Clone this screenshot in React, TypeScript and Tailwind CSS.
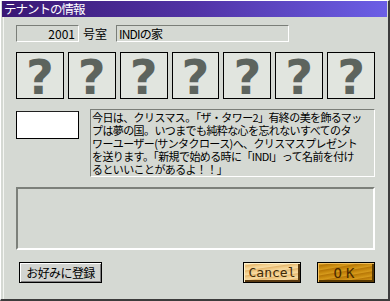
import React from "react";

const jp = { fontFamily: '"Noto Sans CJK JP", "Noto Sans", sans-serif' };

function QBox() {
  return (
    <div className="w-[48px] h-[47px] border border-black bg-[#e1e5df] flex items-center justify-center">
      <span
        className="text-[48px] font-bold leading-none text-[#5d645e] mt-[2px]"
        style={{ fontFamily: '"DejaVu Sans", sans-serif' }}
      >
        ?
      </span>
    </div>
  );
}

export default function App() {
  return (
    <div
      className="w-[390px] h-[301px] bg-[#d5d9d3] border-l border-t border-white border-r-2 border-b-2 border-r-[#3c3c3c] border-b-[#3c3c3c] flex flex-col text-black"
      style={jp}
    >
      <div className="h-[16px] mx-[1px] bg-gradient-to-r from-[#3a1874] via-[#5133a6] to-[#6b5fe6] flex items-center pl-[2px]">
        <span className="text-white text-[12.5px] leading-none tracking-[-1px]">テナントの情報</span>
      </div>
      <div className="flex-1 border-l border-[#f4f6f2] ml-[2px] flex flex-col pl-[12px] pr-[13px]">
        <div className="flex items-center mt-[8px] h-[17px]">
          <div className="w-[63px] h-[17px] border-t border-l border-[#7a7e78] border-b border-r border-b-white border-r-white flex items-center justify-end pr-[3px] text-[12px] leading-none">
            2001
          </div>
          <span className="ml-[4px] text-[12px] leading-none">号室</span>
          <div className="ml-[9px] w-[173px] h-[17px] border-t border-l border-[#7a7e78] border-b border-r border-b-white border-r-white flex items-center pl-[2px] text-[12px] leading-none tracking-[-0.8px]">
            INDIの家
          </div>
        </div>
        <div className="flex gap-[4px] mt-[10px]">
          <QBox />
          <QBox />
          <QBox />
          <QBox />
          <QBox />
          <QBox />
          <QBox />
        </div>
        <div className="flex mt-[10px]">
          <div className="w-[63px] h-[28px] mt-[2px] border border-black border-t-[#202020] bg-white" />
          <div className="ml-[11px] w-[285px] h-[68px] border-t border-l border-[#7a7e78] border-b border-r border-b-white border-r-white pl-[1px] pt-[1px] text-[11px] leading-[13px] tracking-[-0.6px] whitespace-nowrap">
            <p>
              今日は、クリスマス。「ザ・タワー2」有終の美を飾るマッ
              <br />
              プは夢の国。いつまでも純粋な心を忘れないすべてのタ
              <br />
              ワーユーザー(サンタクロース)へ、クリスマスプレゼント
              <br />
              を送ります。「新規で始める時に「INDI」って名前を付け
              <br />
              るといいことがあるよ！！」
            </p>
          </div>
        </div>
        <div className="mt-[10px] w-[359px] h-[63px] border-t-2 border-l-2 border-[#7c807a] border-b-2 border-r-2 border-b-white border-r-white" />
        <div className="flex items-center mt-[12px]">
          <button className="ml-[3px] w-[83px] h-[21px] border border-black bg-[#d2d4d0] shadow-[inset_1px_1px_0_#fff,inset_-1px_-1px_0_#808080] text-[12px] leading-none tracking-[-0.6px] flex items-center justify-center">
            お好みに登録
          </button>
          <button
            className="ml-[141px] w-[58px] h-[21px] border border-black text-[13px] leading-none text-[#402a08] flex items-center justify-center shadow-[inset_1px_1px_0_#fff2cc,inset_-2px_-2px_0_#5a3a10] bg-[repeating-linear-gradient(172deg,#f3d08e_0px,#f7dba2_2px,#e5b870_3px,#f3d08e_5px)]"
            style={{ fontFamily: '"DejaVu Sans Mono", monospace' }}
          >
            Cancel
          </button>
          <button
            className="ml-[16px] w-[58px] h-[21px] border border-black text-[14px] leading-none text-[#4a2a00] flex items-center justify-center tracking-[4px] shadow-[inset_1px_1px_0_#f0c060,inset_-2px_-2px_0_#5a3a00] bg-[repeating-linear-gradient(170deg,#c8890e_0px,#d69a1c_2px,#b87808_3px,#c8890e_5px)]"
            style={{ fontFamily: '"DejaVu Sans Mono", monospace' }}
          >
            OK
          </button>
        </div>
      </div>
    </div>
  );
}
